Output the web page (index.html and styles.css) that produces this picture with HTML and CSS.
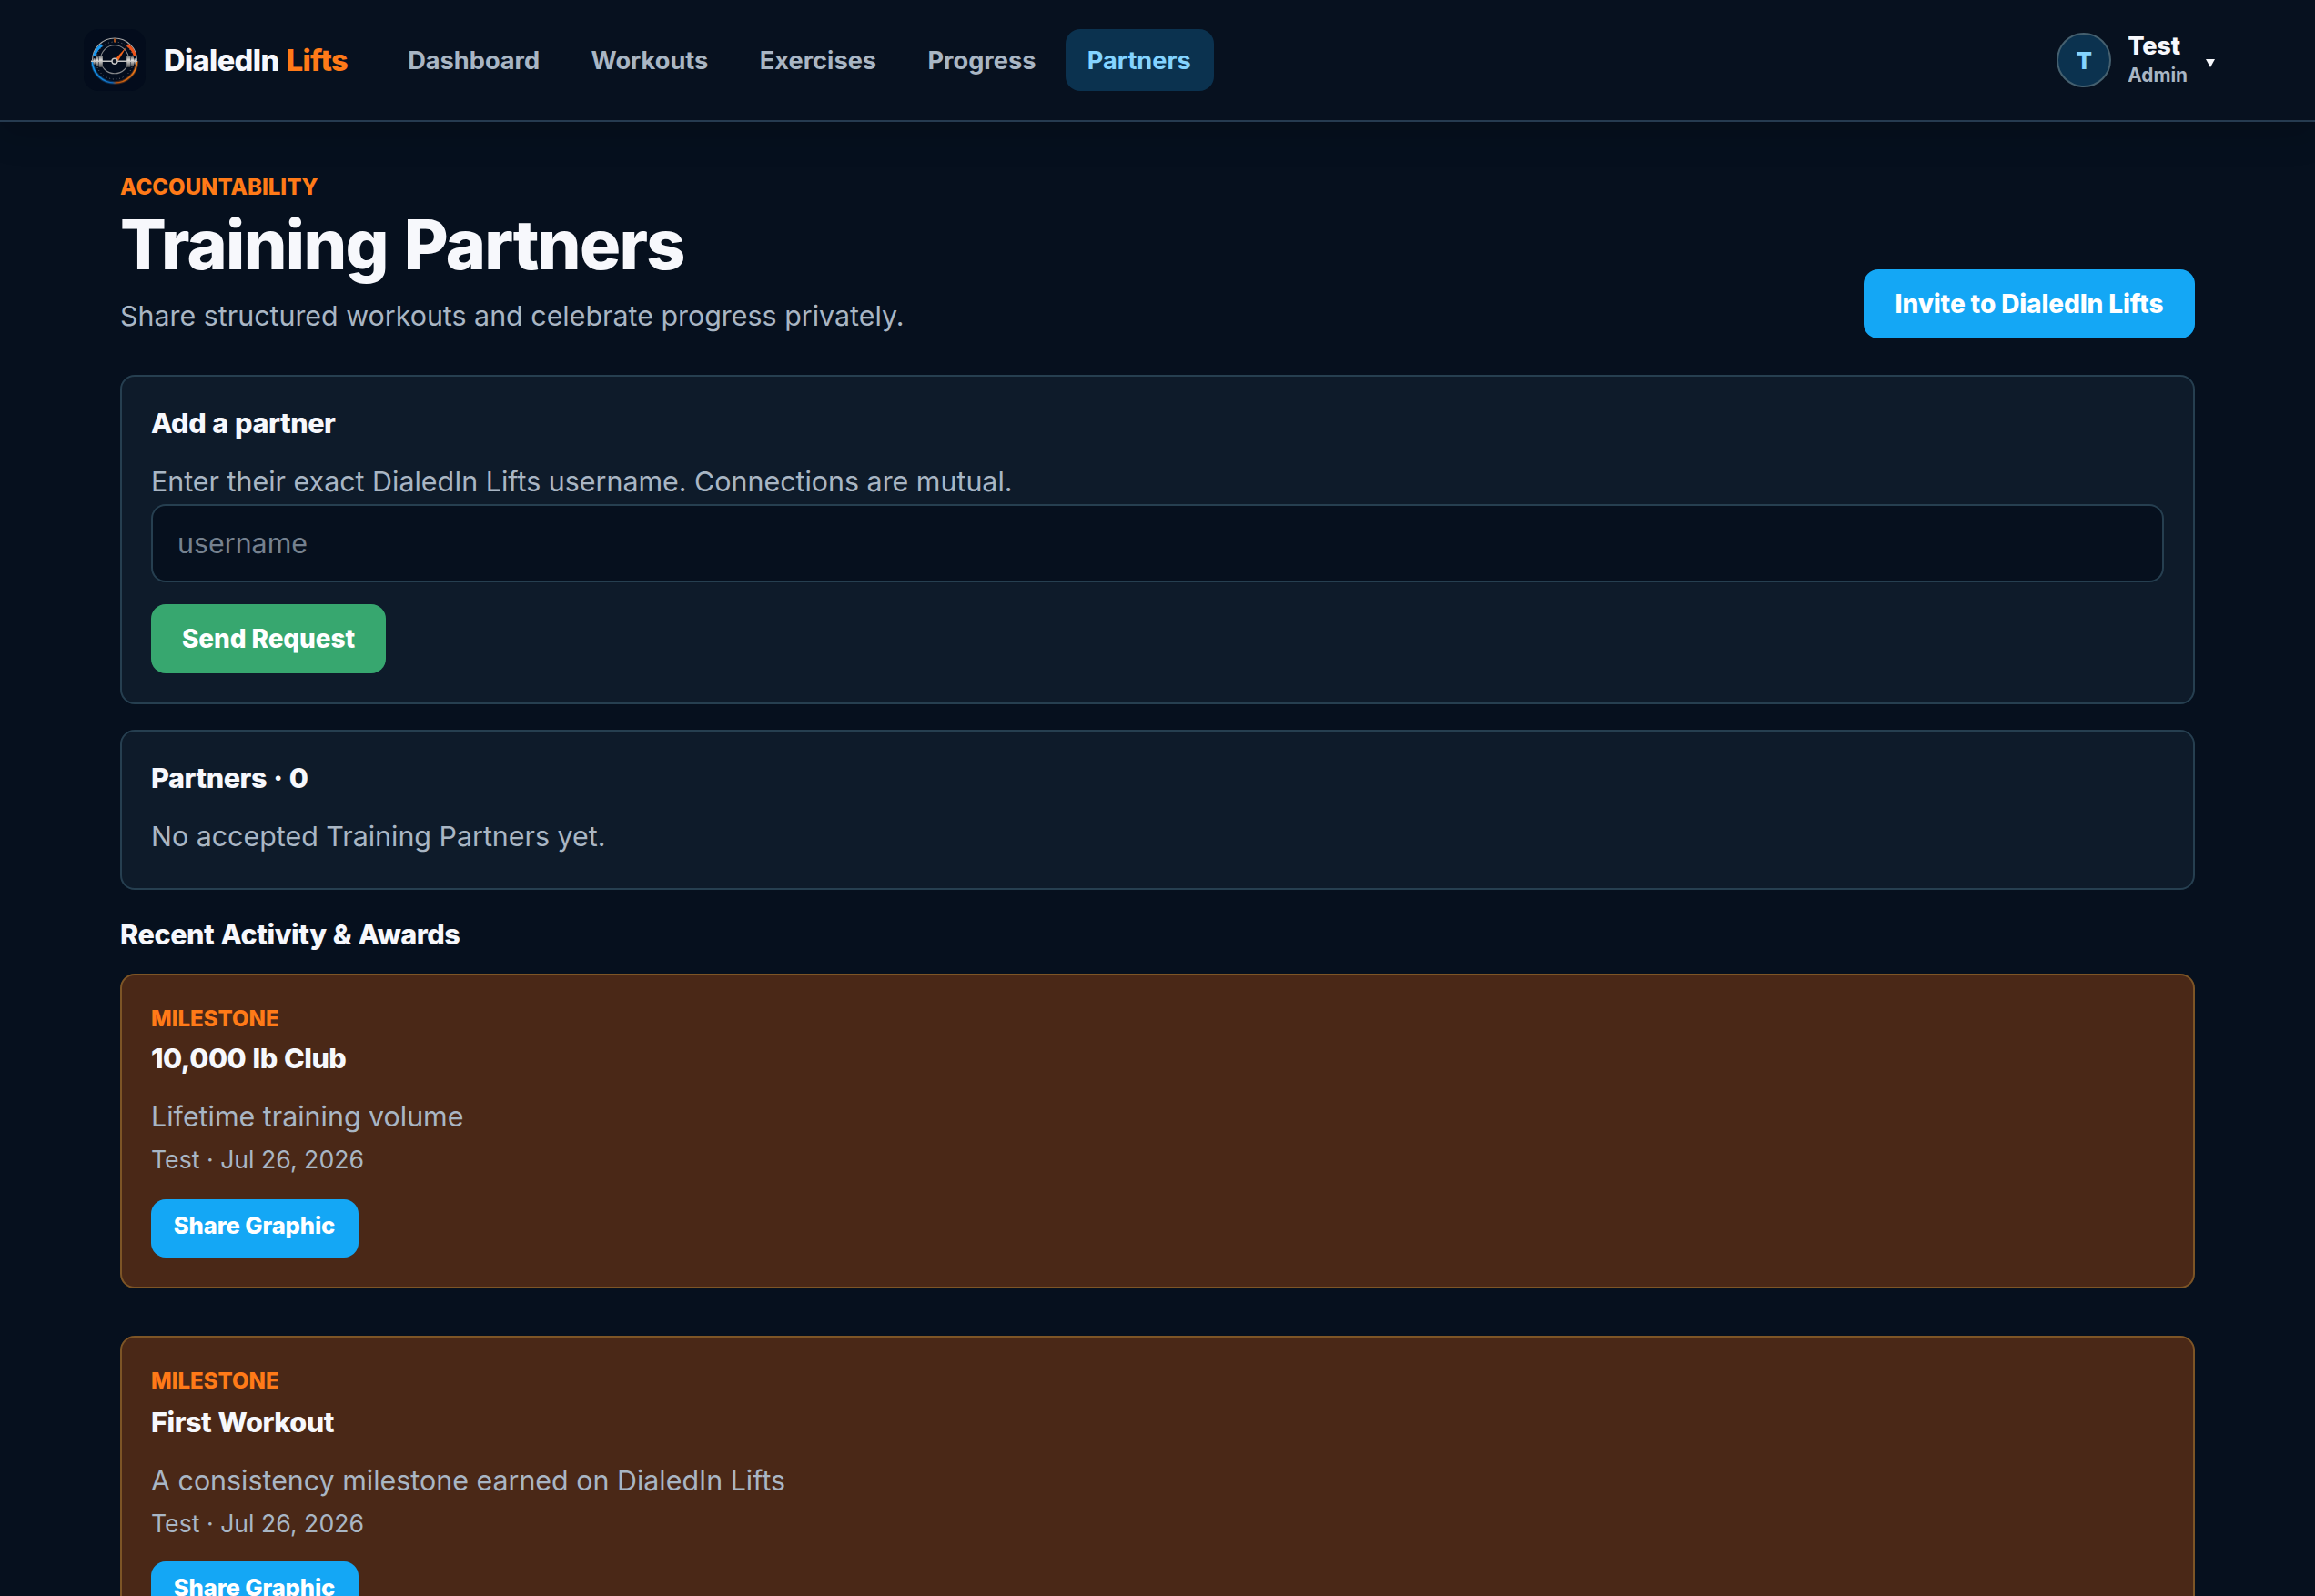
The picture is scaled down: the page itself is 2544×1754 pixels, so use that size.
FILE: index.html
```html
<!DOCTYPE html>
<html lang="en">

<head>
    <meta charset="UTF-8">
    <meta name="viewport" content="width=device-width, initial-scale=1.0">
    <title>Training Partners - DialedIn Lifts</title>
    <link rel="stylesheet" href="styles.css">
</head>

<body>
    <header class="topbar">
        <a class="brand" href="#">
            <svg class="brand-logo" viewBox="0 0 68 68" fill="none">
                <defs>
                    <linearGradient id="plate" x1="0" y1="0" x2="0" y2="1">
                        <stop offset="0" stop-color="#6a6c6e" />
                        <stop offset="0.4" stop-color="#e0dedb" />
                        <stop offset="1" stop-color="#45474a" />
                    </linearGradient>
                    <linearGradient id="glow" x1="9" y1="0" x2="59" y2="0" gradientUnits="userSpaceOnUse">
                        <stop offset="0" stop-color="#1496f0" />
                        <stop offset="0.45" stop-color="#1267b8" />
                        <stop offset="0.55" stop-color="#b5530f" />
                        <stop offset="1" stop-color="#f07a18" />
                    </linearGradient>
                </defs>
                <rect width="68" height="68" rx="16" fill="#030c1c" />
                <path d="M9.500 34.500a24.500 24.500 0 0 1 49 0" stroke="#a3a3a3" stroke-width="1.200" />
                <path d="M9.500 35a24.500 24 0 0 0 49 0" stroke="url(#glow)" stroke-width="3.500" opacity="0.350" />
                <path d="M9.500 35a24.500 24 0 0 0 49 0" stroke="url(#glow)" stroke-width="1.600" />
                <path d="M11.500 29.500a22.500 22.500 0 0 1 8.500-12" stroke="#1a9af2" stroke-width="3.200" />
                <path d="M48 17.500a22.500 22.500 0 0 1 8.500 12" stroke="#ee531a" stroke-width="3.200" />
                <circle cx="34" cy="34.500" r="20.500" stroke="#777a80" stroke-width="1" stroke-dasharray="0.900 2.800" />
                <circle cx="34" cy="33.300" r="15.500" stroke="#85878a" stroke-width="1.100" />
                <path d="M34 10.500v4" stroke="#d8641a" stroke-width="1.500" />
                <path d="M8 35.300h51" stroke="#c4c4c4" stroke-width="1.400" />
                <g fill="url(#plate)">
                    <rect x="10.500" y="32" width="2.200" height="7" rx="1" />
                    <rect x="13" y="30" width="3" height="11" rx="1" />
                    <rect x="16.500" y="29" width="4.300" height="13" rx="1.200" />
                    <rect x="47.200" y="29" width="4.300" height="13" rx="1.200" />
                    <rect x="52" y="30" width="3" height="11" rx="1" />
                    <rect x="55.300" y="32" width="2.200" height="7" rx="1" />
                </g>
                <path d="M35 32.500l12-13-9.200 15.500z" fill="#f2641c" />
                <circle cx="34" cy="35.300" r="3" fill="#0b1220" stroke="#c4c4c4" stroke-width="1.400" />
            </svg>
            <span class="brand-name">DialedIn <span class="brand-accent">Lifts</span></span>
        </a>
        <nav class="nav">
            <a class="nav-link" href="#">Dashboard</a>
            <a class="nav-link" href="#">Workouts</a>
            <a class="nav-link" href="#">Exercises</a>
            <a class="nav-link" href="#">Progress</a>
            <a class="nav-link active" href="#">Partners</a>
        </nav>
        <div class="account">
            <span class="avatar">T</span>
            <span class="account-text">
                <span class="account-name">Test</span>
                <span class="account-role">Admin</span>
            </span>
            <svg class="caret" viewBox="0 0 10 9"><path d="M0 0h10L5 9z" fill="#f7f8fc" /></svg>
        </div>
    </header>

    <main class="page">
        <div class="page-header">
            <div>
                <p class="eyebrow">ACCOUNTABILITY</p>
                <h1>Training Partners</h1>
                <p class="muted">Share structured workouts and celebrate progress privately.</p>
            </div>
            <button class="button invite-button">Invite to DialedIn Lifts</button>
        </div>

        <section class="card">
            <h2>Add a partner</h2>
            <p class="muted">Enter their exact DialedIn Lifts username. Connections are mutual.</p>
            <form class="partner-form">
                <input type="text" name="username" placeholder="username">
                <button type="button" class="button send-button">Send Request</button>
            </form>
        </section>

        <section class="card">
            <h2>Partners · 0</h2>
            <p class="muted">No accepted Training Partners yet.</p>
        </section>

        <h2 class="section-title">Recent Activity &amp; Awards</h2>

        <article class="card award">
            <p class="eyebrow">MILESTONE</p>
            <h3>10,000 lb Club</h3>
            <p class="muted">Lifetime training volume</p>
            <p class="award-meta">Test · Jul 26, 2026</p>
            <button class="button share-button">Share Graphic</button>
        </article>

        <article class="card award award-next">
            <p class="eyebrow">MILESTONE</p>
            <h3>First Workout</h3>
            <p class="muted">A consistency milestone earned on DialedIn Lifts</p>
            <p class="award-meta">Test · Jul 26, 2026</p>
            <button class="button share-button">Share Graphic</button>
        </article>
    </main>
</body>

</html>
```
FILE: styles.css
```css
* {
    box-sizing: border-box;
}

html {
    height: 100%;
    overflow: hidden;
}

body {
    margin: 0;
    height: 100%;
    overflow: hidden;
    background-color: #06101e;
    color: #f7f8fc;
    font-family: Inter, sans-serif;
    font-size: 30.4px;
}

h1,
h2,
h3,
p {
    margin: 0;
}

a {
    color: inherit;
    text-decoration: none;
}

/* top bar */
.topbar {
    display: flex;
    align-items: center;
    height: 134px;
    padding: 0 110px 0 92px;
    background-color: #07111f;
    border-bottom: 2px solid #263b50;
    box-shadow: 0 12px 36px rgba(0, 0, 0, 0.18);
}

.brand {
    display: flex;
    align-items: center;
    gap: 20px;
}

.brand-logo {
    display: block;
    width: 68px;
    height: 68px;
}

.brand-name {
    width: 204px;
    font-size: 32.5px;
    font-weight: 800;
    letter-spacing: -0.018em;
    word-spacing: 0.05em;
    white-space: nowrap;
}

.brand-accent {
    color: #ff7a18;
}

.nav {
    display: flex;
    gap: 8px;
    margin-left: 40px;
}

.nav-link {
    padding: 2px 24.2px 0;
    border-radius: 16px;
    color: #a9b6c4;
    font-size: 27.2px;
    font-weight: 700;
    line-height: 66px;
}

.nav-link.active {
    padding-right: 25px;
    background-color: #0b324f;
    color: #84d4ff;
}

.account {
    display: flex;
    align-items: center;
    margin-left: auto;
}

.avatar {
    width: 60px;
    height: 60px;
    border: 2px solid #45606f;
    border-radius: 50%;
    background-color: #0b324f;
    color: #84d4ff;
    font-size: 26px;
    font-weight: 800;
    line-height: 58px;
    text-align: center;
}

.account-text {
    display: flex;
    flex-direction: column;
    margin-left: 18px;
    font-weight: 700;
}

.account-name {
    font-size: 27.2px;
    font-weight: 800;
    letter-spacing: -0.01em;
    line-height: 33px;
}

.account-role {
    color: #a9b6c4;
    font-size: 20.8px;
    line-height: 32px;
}

.caret {
    width: 10px;
    height: 9px;
    margin: 7px 0 0 20px;
}

/* page */
.page {
    padding: 53px 132px 0;
}

.page-header {
    display: flex;
    align-items: flex-end;
    justify-content: space-between;
    margin-bottom: 40px;
}

.eyebrow {
    padding-top: 2px;
    color: #ff7a18;
    font-size: 24px;
    font-weight: 800;
    line-height: 34px;
}

h1 {
    margin: 4px 0 9px;
    font-size: 75.2px;
    font-weight: 800;
    letter-spacing: -0.022em;
    word-spacing: 0.04em;
    line-height: 84px;
}

h2,
h3 {
    margin-bottom: 18px;
    font-size: 30.6px;
    font-weight: 800;
    letter-spacing: -0.015em;
    word-spacing: 0.03em;
    line-height: 38px;
}

.muted {
    padding-top: 2px;
    color: #a9b6c4;
    line-height: 50px;
}

.button {
    display: block;
    height: 76px;
    padding: 0;
    border: none;
    border-radius: 16px;
    background-color: #14a7f5;
    color: white;
    font-family: inherit;
    font-size: 28px;
    font-weight: 800;
    letter-spacing: -0.004em;
    cursor: pointer;
}

.invite-button {
    width: 364px;
}

.card {
    margin-bottom: 28px;
    padding: 32px;
    border: 2px solid #263f50;
    border-radius: 16px;
    background-color: #0e1b2a;
}

.partner-form input {
    display: block;
    width: 100%;
    height: 86px;
    margin-bottom: 24px;
    padding: 0 27px;
    border: 2px solid #263f50;
    border-radius: 16px;
    background-color: #06101e;
    color: #f7f8fc;
    font-family: inherit;
    font-size: 30.4px;
}

.partner-form input::placeholder {
    color: #75818f;
}

.send-button {
    width: 258px;
    background-color: #37a76f;
}

.section-title {
    margin-bottom: 23px;
    padding-top: 1px;
    line-height: 40px;
}

/* awards */
.award {
    margin-bottom: 52px;
    border-color: #7d5526;
    background-color: #4a2817;
}

.award .eyebrow {
    margin-bottom: 10px;
    line-height: 28px;
}

.award-meta {
    margin: 1px 0 23px;
    color: #a9b6c4;
    font-size: 26.67px;
    line-height: 42px;
}

.award-next .eyebrow {
    margin-bottom: 12px;
}

.award-next .award-meta {
    margin-bottom: 21px;
}

.share-button {
    width: 228px;
    height: 64px;
    padding: 0 1px 7px 0;
    font-size: 25.6px;
}
```
